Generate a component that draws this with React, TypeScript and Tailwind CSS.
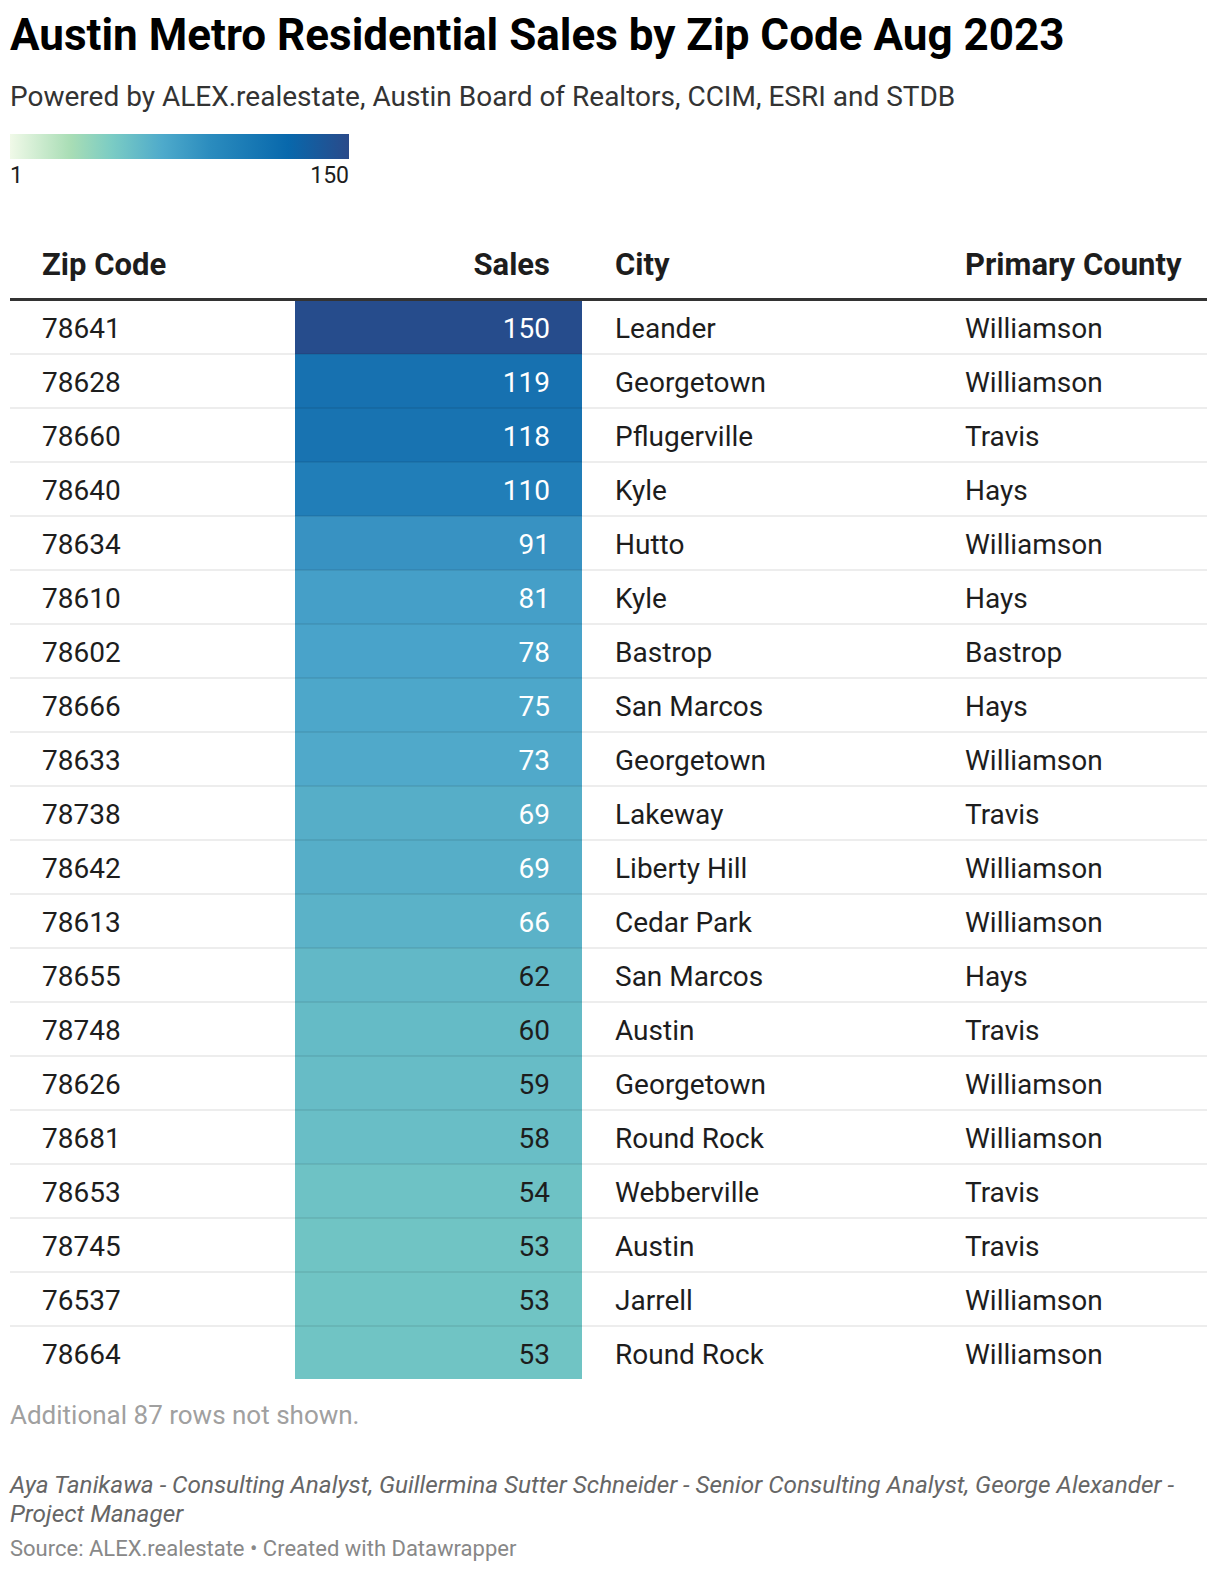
import React from 'react';

type Row = {
  zip: string;
  sales: number;
  city: string;
  county: string;
  cell: string;
};

const rows: Row[] = [
  { zip: '78641', sales: 150, city: 'Leander', county: 'Williamson', cell: 'bg-[#264c8c] text-white' },
  { zip: '78628', sales: 119, city: 'Georgetown', county: 'Williamson', cell: 'bg-[#1771b0] text-white' },
  { zip: '78660', sales: 118, city: 'Pflugerville', county: 'Travis', cell: 'bg-[#1873b1] text-white' },
  { zip: '78640', sales: 110, city: 'Kyle', county: 'Hays', cell: 'bg-[#217eb8] text-white' },
  { zip: '78634', sales: 91, city: 'Hutto', county: 'Williamson', cell: 'bg-[#3892c2] text-white' },
  { zip: '78610', sales: 81, city: 'Kyle', county: 'Hays', cell: 'bg-[#459fc8] text-white' },
  { zip: '78602', sales: 78, city: 'Bastrop', county: 'Bastrop', cell: 'bg-[#49a3ca] text-white' },
  { zip: '78666', sales: 75, city: 'San Marcos', county: 'Hays', cell: 'bg-[#4da7ca] text-white' },
  { zip: '78633', sales: 73, city: 'Georgetown', county: 'Williamson', cell: 'bg-[#50a9ca] text-white' },
  { zip: '78738', sales: 69, city: 'Lakeway', county: 'Travis', cell: 'bg-[#56aec8] text-white' },
  { zip: '78642', sales: 69, city: 'Liberty Hill', county: 'Williamson', cell: 'bg-[#56aec8] text-white' },
  { zip: '78613', sales: 66, city: 'Cedar Park', county: 'Williamson', cell: 'bg-[#5bb2c8] text-white' },
  { zip: '78655', sales: 62, city: 'San Marcos', county: 'Hays', cell: 'bg-[#62b8c7] text-[#1d1d1d]' },
  { zip: '78748', sales: 60, city: 'Austin', county: 'Travis', cell: 'bg-[#65bbc6] text-[#1d1d1d]' },
  { zip: '78626', sales: 59, city: 'Georgetown', county: 'Williamson', cell: 'bg-[#67bcc6] text-[#1d1d1d]' },
  { zip: '78681', sales: 58, city: 'Round Rock', county: 'Williamson', cell: 'bg-[#69bec6] text-[#1d1d1d]' },
  { zip: '78653', sales: 54, city: 'Webberville', county: 'Travis', cell: 'bg-[#6ec2c5] text-[#1d1d1d]' },
  { zip: '78745', sales: 53, city: 'Austin', county: 'Travis', cell: 'bg-[#70c4c4] text-[#1d1d1d]' },
  { zip: '76537', sales: 53, city: 'Jarrell', county: 'Williamson', cell: 'bg-[#70c4c4] text-[#1d1d1d]' },
  { zip: '78664', sales: 53, city: 'Round Rock', county: 'Williamson', cell: 'bg-[#70c4c4] text-[#1d1d1d]' },
];

export default function App() {
  return (
    <div className="min-h-[1572px] w-[1220px] bg-white px-[10px] pt-[9px] font-['Roboto',sans-serif] text-[#1d1d1d]">
      <h1 className="text-[44px] font-bold leading-[52px] text-black">
        Austin Metro Residential Sales by Zip Code Aug 2023
      </h1>
      <p className="mt-[18px] text-[28px] leading-[36px] text-[#333]">
        Powered by ALEX.realestate, Austin Board of Realtors, CCIM, ESRI and STDB
      </p>

      <div className="mt-[19px] w-[339px]">
        <div className="h-[25px] w-full bg-[linear-gradient(to_right,#f0f9e8_0%,#a8ddb5_18%,#7bccc4_30%,#4eaacb_45%,#2b8cbe_59%,#0868ac_82%,#2a4a8a_100%)]" />
        <div className="mt-[3px] flex justify-between text-[23px] leading-[28px] text-[#1d1d1d]">
          <span>1</span>
          <span>150</span>
        </div>
      </div>

      <table className="mt-[57px] w-[1197px] table-fixed border-collapse">
        <colgroup>
          <col className="w-[285px]" />
          <col className="w-[287px]" />
          <col className="w-[349px]" />
          <col className="w-[276px]" />
        </colgroup>
        <thead>
          <tr className="border-b-[3px] border-[#333]">
            <th className="pb-[15px] pl-[32px] text-left text-[31px] font-bold leading-[36px]">Zip Code</th>
            <th className="pb-[15px] pr-[32px] text-right text-[31px] font-bold leading-[36px]">Sales</th>
            <th className="pb-[15px] pl-[33px] text-left text-[31px] font-bold leading-[36px]">City</th>
            <th className="pb-[15px] pl-[34px] text-left text-[31px] font-bold leading-[36px]">Primary County</th>
          </tr>
        </thead>
        <tbody className="text-[28px]">
          {rows.map((r, i) => (
            <tr key={r.zip + i} className={i < rows.length - 1 ? 'border-b-2 border-black/[0.07]' : ''}>
              <td className="pl-[32px] pt-[6px] pb-[2px] leading-[44px]">{r.zip}</td>
              <td className={`pr-[32px] pt-[6px] pb-[2px] text-right leading-[44px] ${r.cell}`}>{r.sales}</td>
              <td className="pl-[33px] pt-[6px] pb-[2px] leading-[44px]">{r.city}</td>
              <td className="pl-[34px] pt-[6px] pb-[2px] leading-[44px]">{r.county}</td>
            </tr>
          ))}
        </tbody>
      </table>

      <p className="mt-[20px] text-[26px] leading-[32px] text-[#a0a0a0]">Additional 87 rows not shown.</p>

      <p className="mt-[39px] text-[24.3px] italic leading-[29px] text-[#666]">
        Aya Tanikawa - Consulting Analyst, Guillermina Sutter Schneider - Senior Consulting Analyst, George Alexander -
        Project Manager
      </p>
      <p className="mt-[7px] text-[22px] leading-[28px] text-[#888]">
        Source: ALEX.realestate • Created with Datawrapper
      </p>
    </div>
  );
}
